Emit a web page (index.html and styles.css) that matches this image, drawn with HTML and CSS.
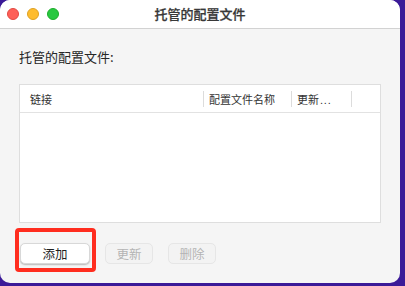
FILE: index.html
```html
<!DOCTYPE html>
<html lang="zh">
<head>
<meta charset="utf-8">
<link rel="stylesheet" href="styles.css">
</head>
<body>
<div class="window">
  <div class="titlebar">
    <div class="lights">
      <span class="light red"></span>
      <span class="light yellow"></span>
      <span class="light green"></span>
    </div>
    <div class="title">托管的配置文件</div>
  </div>
  <div class="content">
    <div class="label">托管的配置文件:</div>
    <div class="table">
      <div class="thead">
        <div class="th c1">链接</div>
        <div class="th c2">配置文件名称</div>
        <div class="th c3">更新<span class="ell">...</span></div>
        <div class="th c4"></div>
      </div>
      <div class="tbody"></div>
    </div>
    <div class="buttons">
      <button class="btn primary">添加</button>
      <button class="btn disabled">更新</button>
      <button class="btn disabled">删除</button>
    </div>
  </div>
  <div class="highlight"></div>
</div>
</body>
</html>
```
FILE: styles.css
```css
* { box-sizing: border-box; }
html, body {
  margin: 0;
  padding: 0;
  width: 405px;
  height: 286px;
  background: #3b1a98;
  overflow: hidden;
  font-family: "Noto Sans CJK SC", "Noto Sans", sans-serif;
}
.window {
  position: relative;
  width: 400px;
  height: 283px;
  background: #f5f5f5;
  border-radius: 10px;
  overflow: hidden;
}
.titlebar {
  position: relative;
  height: 29px;
  background: #ffffff;
  border-bottom: 1px solid #d2d2d2;
  display: flex;
  align-items: center;
  justify-content: center;
}
.lights {
  position: absolute;
  left: 7px;
  top: 8px;
  display: flex;
  gap: 8px;
}
.light {
  width: 12px;
  height: 12px;
  border-radius: 50%;
  display: block;
}
.light.red { background: #fe5f57; border: 0.5px solid #e14942; }
.light.yellow { background: #febc2e; border: 0.5px solid #dea123; }
.light.green { background: #28c840; border: 0.5px solid #1dad2b; }
.title {
  font-size: 13px;
  font-weight: 500;
  color: #383838;
  line-height: 18px;
  -webkit-text-stroke: 0.25px #383838;
}
.content {
  padding: 19px 19px 0 19px;
}
.label {
  font-size: 13px;
  line-height: 18px;
  color: #262626;
  height: 18px;
}
.table {
  margin-top: 18px;
  width: 362px;
  height: 139px;
  background: #ffffff;
  border: 1px solid #dedede;
  display: flex;
  flex-direction: column;
}
.thead {
  height: 28px;
  border-bottom: 1px solid #e2e2e2;
  display: flex;
  align-items: center;
  font-size: 11px;
  color: #333333;
}
.th {
  height: 16px;
  line-height: 16px;
  white-space: nowrap;
}
.ell {
  font-family: "Liberation Sans", sans-serif;
  letter-spacing: 0.8px;
  margin-left: 1px;
}
.c1 { width: 184px; padding-left: 10px; border-right: 1px solid #dcdcdc; }
.c2 { width: 88px; padding-left: 5px; border-right: 1px solid #dcdcdc; }
.c3 { width: 60px; padding-left: 5px; border-right: 1px solid #dcdcdc; }
.c4 { flex: 1; }
.tbody { flex: 1; }
.buttons {
  margin-top: 20px;
  display: flex;
  gap: 15px;
  padding-left: 1px;
}
.btn {
  font-family: "Noto Sans CJK SC", "Noto Sans", sans-serif;
  font-size: 12.5px;
  height: 21px;
  line-height: 19px;
  padding: 0;
  border-radius: 5px;
  margin: 0;
}
.btn.primary {
  width: 70px;
  background: #ffffff;
  color: #1f1f1f;
  border: 0.5px solid #d8d8d8;
  box-shadow: 0 1px 1.5px rgba(0,0,0,0.25);
}
.btn.disabled {
  width: 48px;
  background: #f3f3f3;
  color: #b4b4b4;
  border: 1px solid #e6e6e6;
}
.highlight {
  position: absolute;
  left: 15px;
  top: 228px;
  width: 81px;
  height: 44px;
  border: 4px solid #ff2d1f;
  border-radius: 4px;
}
```
